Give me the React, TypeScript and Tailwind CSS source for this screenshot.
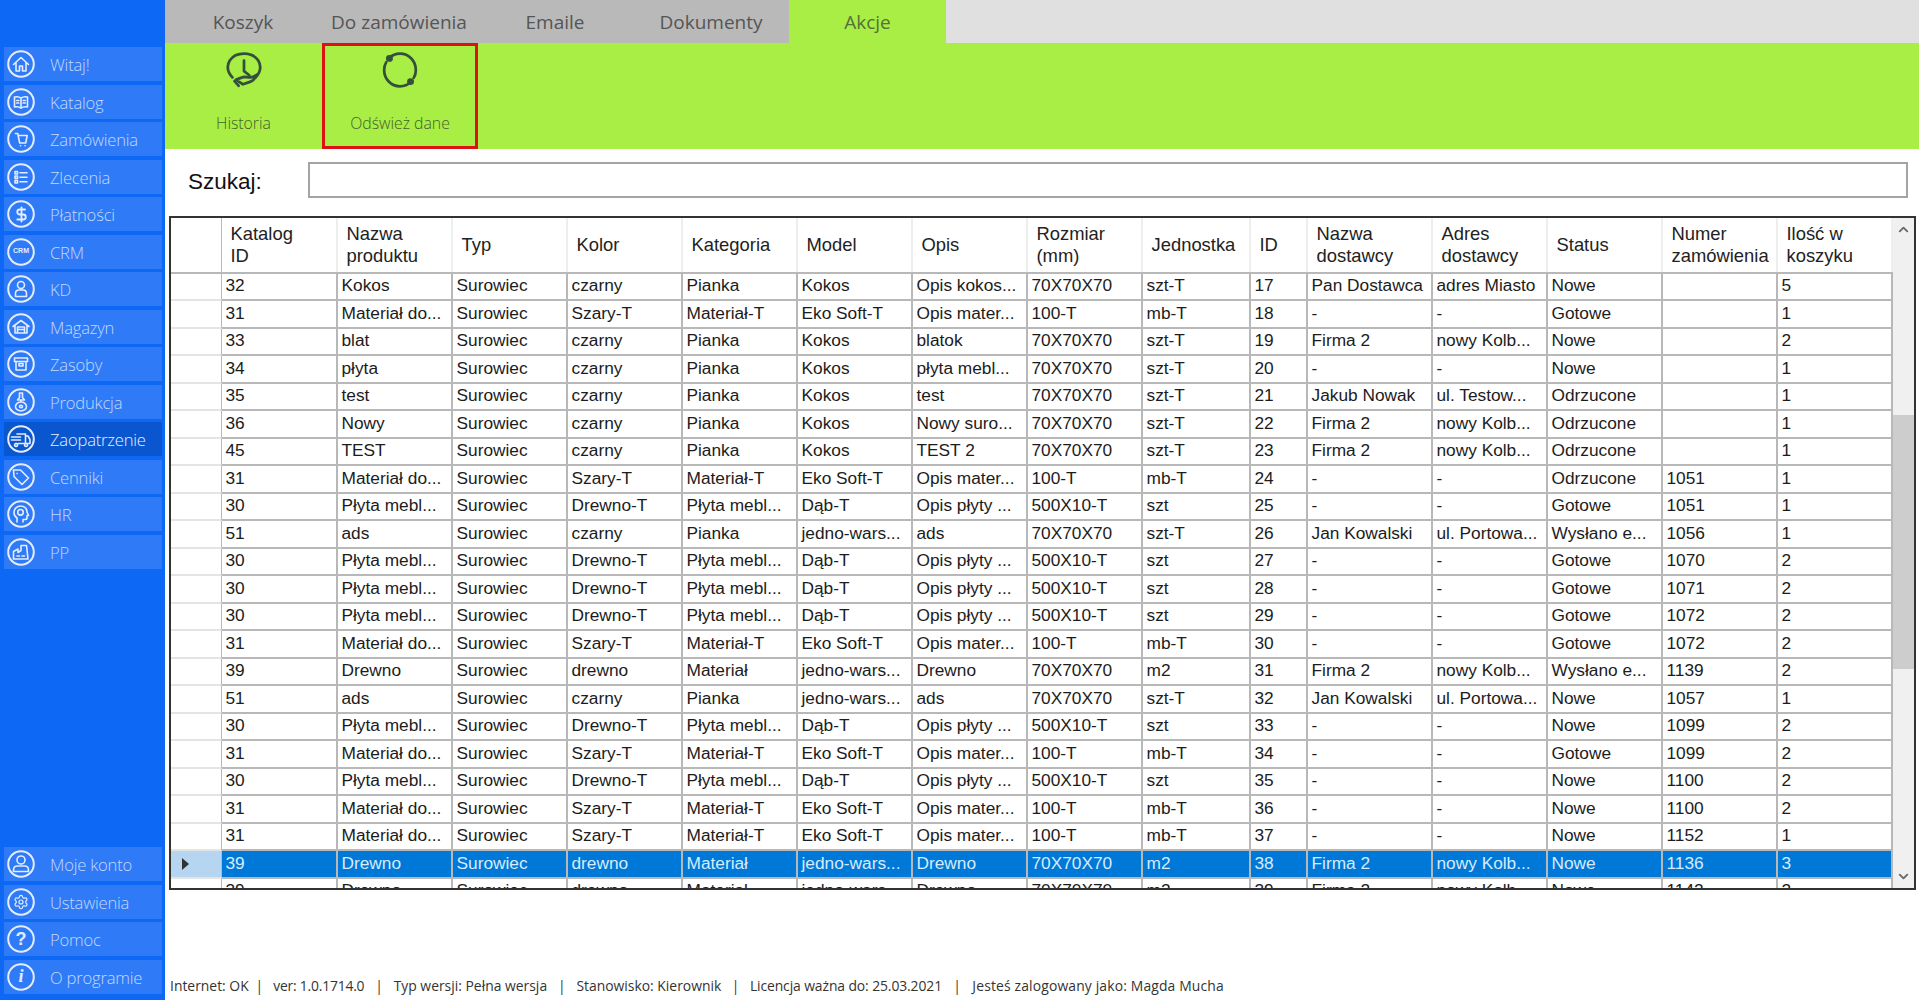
import React from 'react';
import { ChevronUp, ChevronDown, DollarSign, Settings } from 'lucide-react';

const glyphs: Record<string, React.ReactNode> = {
  home: <path d="M6.500 14.500 14 7.500l7.500 7M9 12.500V21h3.500v-5h3v5H19v-8.500" />,
  book: <path d="M7.500 9c2.500-.6 4.800-.3 6.500 1.200 1.700-1.500 4-1.800 6.500-1.200v10c-2.500-.6-4.800-.2-6.500 1.200-1.700-1.400-4-1.800-6.500-1.200zM14 10.200v10M9.700 12.500h2.200M9.700 15h2.200M16.100 12.500h2.200M16.100 15h2.200" />,
  cart: <path d="M8.500 8.500h2.200l2 9.500h6l1.500-7.500H11.200M13.500 20.800h.1M18 20.800h.1" />,
  list: <path d="M8 8.500h2.500V11H8zM8 13h2.500v2.500H8zM8 17.500h2.500V20H8zM13 9.800h7M13 14.200h7M13 18.700h7" />,
  user: <path d="M14 6.500a3.500 3.500 0 1 1 0 7 3.500 3.500 0 0 1 0-7zM8.500 21.500v-3c0-2 1.500-3.500 3.500-3.500h4c2 0 3.500 1.500 3.500 3.500v3z" />,
  warehouse: <path d="M6 13.500 14 7.500l8 6M8 12.500V20h12v-7.500M10.500 20v-6h7v6M10.500 16.500h7" />,
  box: <path d="M7.500 8h13v3.500h-13zM9 11.500V20h10v-8.500M12 13.500h4V16h-4z" />,
  drill: <path d="M12.500 5v4.500L10.500 12h7l-2-2.500V5zM14 12v2M8.500 18.500a5.500 4.500 0 1 0 11 0 5.500 4.500 0 1 0-11 0zM12.500 18.500a1.500 1.300 0 1 0 3 0 1.500 1.300 0 1 0-3 0z" />,
  truck: <path d="M10 9h8.500v9.500H11M18.500 11h2.500l2 3.500v4h-4.500M4.500 12h9M4.500 15h9M9 18.500a1.500 1.500 0 1 0 .1 0M19 18.500a1.500 1.500 0 1 0 .1 0" />,
  tag: <path d="M6.500 7h7l8 8-6.500 6.500-8-8zM10 10.500h.1" />,
  head: <path d="M10 22v-4c-2-1.200-3-3-3-5.500C7 8.800 10 6 13.500 6c3.700 0 6.500 2.500 6.500 6l1.500 3.500H20V18c0 1-.8 1.500-2 1.500h-2V22M13.500 9.500a2.800 2.800 0 1 0 0 5.600 2.800 2.800 0 0 0 0-5.600z" />,
  factory: <path d="M6.500 21v-7.500l4.500-2.500v3.500l3-2V7.500h5.500L21 21zM10 18h2.500M15 18h2.500" />,
  account: <path d="M14 6a4 4 0 1 1 0 8 4 4 0 0 1 0-8zM6.500 21.500v-1.500c0-2.500 1.500-4 4-4h7c2.500 0 4 1.500 4 4v1.500z" />,
};

const Icon = ({ name }: { name: string }) => (
  <span className="relative block w-7 h-7 shrink-0 ml-[3px] text-[#e4edff]">
    <svg viewBox="0 0 28 28" width="28" height="28" fill="none" stroke="currentColor" strokeWidth="1.600" strokeLinecap="round" strokeLinejoin="round">
      <circle cx="14" cy="14" r="12.800" strokeWidth="2" />
      {glyphs[name]}
    </svg>
    {name === 'dollar' && <DollarSign size={17} strokeWidth={2.600} className="absolute top-[5.500px] left-[5.500px]" />}
    {name === 'gear' && <Settings size={16} strokeWidth={1.800} className="absolute top-[6px] left-[6px]" />}
    {name === 'crm' && <span className="absolute inset-0 flex items-center justify-center text-[7px] font-bold font-['Liberation_Sans',sans-serif]">CRM</span>}
    {name === 'help' && <span className="absolute inset-0 flex items-center justify-center text-[18px] font-bold font-['Liberation_Sans',sans-serif]">?</span>}
    {name === 'info' && <span className="absolute inset-0 flex items-center justify-center text-[18px] font-bold italic font-['Liberation_Serif',serif]">i</span>}
  </span>
);

const menuTop = [
  ['Witaj!', 'home'],
  ['Katalog', 'book'],
  ['Zamówienia', 'cart'],
  ['Zlecenia', 'list'],
  ['Płatności', 'dollar'],
  ['CRM', 'crm'],
  ['KD', 'user'],
  ['Magazyn', 'warehouse'],
  ['Zasoby', 'box'],
  ['Produkcja', 'drill'],
  ['Zaopatrzenie', 'truck'],
  ['Cenniki', 'tag'],
  ['HR', 'head'],
  ['PP', 'factory'],
];
const menuBottom = [
  ['Moje konto', 'account'],
  ['Ustawienia', 'gear'],
  ['Pomoc', 'help'],
  ['O programie', 'info'],
];

const MenuItem = ({ label, icon }: { label: string; icon: string }) => {
  const active = label === 'Zaopatrzenie';
  return (
    <div className={`h-[34px] mb-[3.500px] flex items-center ${active ? 'bg-[#0a56cf] text-[#e8f0ff]' : 'bg-[#2f7bf7] text-[#c4d9fc]'}`}>
      <Icon name={icon} />
      <span className="ml-[15px] pt-[3px] text-[16.600px] font-light tracking-[-0.2px]">{label}</span>
    </div>
  );
};

const columns = [
  { w: 'w-[116px]', title: ['Katalog', 'ID'] },
  { w: 'w-[115px]', title: ['Nazwa', 'produktu'] },
  { w: 'w-[115px]', title: ['Typ'] },
  { w: 'w-[115px]', title: ['Kolor'] },
  { w: 'w-[115px]', title: ['Kategoria'] },
  { w: 'w-[115px]', title: ['Model'] },
  { w: 'w-[115px]', title: ['Opis'] },
  { w: 'w-[115px]', title: ['Rozmiar', '(mm)'] },
  { w: 'w-[108px]', title: ['Jednostka'] },
  { w: 'w-[57px]', title: ['ID'] },
  { w: 'w-[125px]', title: ['Nazwa', 'dostawcy'] },
  { w: 'w-[115px]', title: ['Adres', 'dostawcy'] },
  { w: 'w-[115px]', title: ['Status'] },
  { w: 'w-[115px]', title: ['Numer', 'zamówienia'] },
  { w: 'w-[115px]', title: ['Ilość w', 'koszyku'] },
];

const kokos = (cat: string, name: string, opis: string) => [cat, name, 'Surowiec', 'czarny', 'Pianka', 'Kokos', opis, '70X70X70', 'szt-T'];
const material = ['31', 'Materiał do...', 'Surowiec', 'Szary-T', 'Materiał-T', 'Eko Soft-T', 'Opis mater...', '100-T', 'mb-T'];
const plyta = ['30', 'Płyta mebl...', 'Surowiec', 'Drewno-T', 'Płyta mebl...', 'Dąb-T', 'Opis płyty ...', '500X10-T', 'szt'];
const ads = ['51', 'ads', 'Surowiec', 'czarny', 'Pianka', 'jedno-wars...', 'ads', '70X70X70', 'szt-T'];
const drewno = ['39', 'Drewno', 'Surowiec', 'drewno', 'Materiał', 'jedno-wars...', 'Drewno', '70X70X70', 'm2'];

const rows: string[][] = [
  [...kokos('32', 'Kokos', 'Opis kokos...'), '17', 'Pan Dostawca', 'adres Miasto', 'Nowe', '', '5'],
  [...material, '18', '-', '-', 'Gotowe', '', '1'],
  [...kokos('33', 'blat', 'blatok'), '19', 'Firma 2', 'nowy Kolb...', 'Nowe', '', '2'],
  [...kokos('34', 'płyta', 'płyta mebl...'), '20', '-', '-', 'Nowe', '', '1'],
  [...kokos('35', 'test', 'test'), '21', 'Jakub Nowak', 'ul. Testow...', 'Odrzucone', '', '1'],
  [...kokos('36', 'Nowy', 'Nowy suro...'), '22', 'Firma 2', 'nowy Kolb...', 'Odrzucone', '', '1'],
  [...kokos('45', 'TEST', 'TEST 2'), '23', 'Firma 2', 'nowy Kolb...', 'Odrzucone', '', '1'],
  [...material, '24', '-', '-', 'Odrzucone', '1051', '1'],
  [...plyta, '25', '-', '-', 'Gotowe', '1051', '1'],
  [...ads, '26', 'Jan Kowalski', 'ul. Portowa...', 'Wysłano e...', '1056', '1'],
  [...plyta, '27', '-', '-', 'Gotowe', '1070', '2'],
  [...plyta, '28', '-', '-', 'Gotowe', '1071', '2'],
  [...plyta, '29', '-', '-', 'Gotowe', '1072', '2'],
  [...material, '30', '-', '-', 'Gotowe', '1072', '2'],
  [...drewno, '31', 'Firma 2', 'nowy Kolb...', 'Wysłano e...', '1139', '2'],
  [...ads, '32', 'Jan Kowalski', 'ul. Portowa...', 'Nowe', '1057', '1'],
  [...plyta, '33', '-', '-', 'Nowe', '1099', '2'],
  [...material, '34', '-', '-', 'Gotowe', '1099', '2'],
  [...plyta, '35', '-', '-', 'Nowe', '1100', '2'],
  [...material, '36', '-', '-', 'Nowe', '1100', '2'],
  [...material, '37', '-', '-', 'Nowe', '1152', '1'],
  [...drewno, '38', 'Firma 2', 'nowy Kolb...', 'Nowe', '1136', '3'],
  [...drewno, '39', 'Firma 2', 'nowy Kolb...', 'Nowe', '1142', '2'],
];
const selectedRow = 21;

const tabs = ['Koszyk', 'Do zamówienia', 'Emaile', 'Dokumenty', 'Akcje'];

export default function App() {
  return (
    <div className="w-[1919px] h-[1000px] flex overflow-hidden bg-white font-['Open_Sans',sans-serif]">
      {/* Sidebar */}
      <aside className="w-[165px] shrink-0 bg-[#0d69f5] flex flex-col justify-between pt-[47px] pl-1 pr-[3px] pb-[3px]">
        <div>
          {menuTop.map(([label, icon]) => <MenuItem key={label} label={label} icon={icon} />)}
        </div>
        <div>
          {menuBottom.map(([label, icon]) => <MenuItem key={label} label={label} icon={icon} />)}
        </div>
      </aside>

      <main className="flex-1 min-w-0 flex flex-col">
        {/* Tabs */}
        <div className="h-[43px] shrink-0 flex bg-[#e0e0e0]">
          {tabs.map(t => (
            <div key={t} className={`flex items-center justify-center pt-[1px] text-[19px] ${t === 'Akcje' ? 'w-[157px] bg-[#a9ee44] text-[#55703a]' : 'w-[156px] bg-[#b9b9b9] text-[#555555]'}`}>
              {t}
            </div>
          ))}
        </div>

        {/* Toolbar */}
        <div className="h-[106px] shrink-0 flex bg-[#a9ee44] text-[#46602e]">
          <div className="w-[157px] flex flex-col items-center pt-[8px]">
            <svg viewBox="0 0 36 36" width="38" height="38" fill="none" stroke="#33503c" strokeWidth="2.600" strokeLinecap="round" strokeLinejoin="round">
              <path d="M7 25C2.500 20 1.500 14 4.500 9 7.500 4.500 12.500 2.500 18 2.500c5.500 0 10.500 2 13.500 6.500 3 5 2 11-2.500 16" />
              <path d="M18 9v10l5 4" />
              <path d="M11 27c3-1.500 5-2 7-2.500l5 .5c3 .5 5-1 7-2.500-1 4-4 6-7 7l-6 2-4-2.500z" />
              <path d="M11 27l-2 1.500 4 4.500" />
            </svg>
            <span className="mt-[22.500px] text-[15.800px] font-light">Historia</span>
          </div>
          <div className="w-[156px] flex flex-col items-center pt-[5px] border-[3px] border-[#dd1313]">
            <svg viewBox="0 0 36 36" width="38" height="38" fill="none" stroke="#33503c" strokeWidth="2.600" strokeLinecap="round">
              <path d="M8 6.500C11 3.500 14.500 2.500 18 2.500c8.500 0 15 7 15 15.500 0 2.500-.5 5-2 7.500" />
              <path d="M28 29.500C25 32.500 21.500 33.500 18 33.500 9.500 33.500 3 26.500 3 18c0-2.500.5-5 2-7.500" />
              <circle cx="8" cy="7" r="2" fill="#33503c" />
              <circle cx="28" cy="29" r="2" fill="#33503c" />
            </svg>
            <span className="mt-[22.500px] text-[15.800px] font-light">Odśwież dane</span>
          </div>
        </div>

        {/* Search */}
        <div className="h-[67px] shrink-0 flex items-center pl-[23px] pr-[11px] pb-[6px]">
          <span className="w-[120px] shrink-0 pt-[4px] text-[22.500px] text-[#111111] font-['Liberation_Sans',sans-serif]">Szukaj:</span>
          <div className="flex-1 h-[36px] border-2 border-[#a4a4a4] bg-white" />
        </div>

        {/* Grid */}
        <div className="ml-[4px] mr-[3px] h-[674px] shrink-0 border-2 border-[#333333] flex overflow-hidden bg-white font-['Liberation_Sans',sans-serif]">
          <div className="flex-1 min-w-0 overflow-hidden">
            <div className="h-[55.500px] flex border-b-2 border-[#b8b8b8]">
              <div className="w-[51px] shrink-0 border-r border-[#b8b8b8]" />
              {columns.map(c => (
                <div key={c.title.join(' ')} className={`${c.w} shrink-0 flex flex-col justify-center pl-[8.500px] text-[18.400px] leading-[22px] text-[#222222] border-r-2 border-[#eeeeee]`}>
                  {c.title.map(line => <span key={line} className="whitespace-nowrap">{line}</span>)}
                </div>
              ))}
            </div>
            {rows.map((row, i) => {
              const selected = i === selectedRow;
              return (
                <div key={i} className="h-[27.500px] flex">
                  <div className={`w-[51px] shrink-0 flex items-center border-r border-[#b8b8b8] border-b-2 border-b-[#e4e4e4] ${selected ? 'bg-[#b5d5f0]' : ''}`}>
                    {selected && <span className="ml-[11px] w-0 h-0 border-y-[6px] border-y-transparent border-l-[7px] border-l-[#333333]" />}
                  </div>
                  {row.map((cell, j) => (
                    <div key={j} className={`${columns[j].w} shrink-0 flex items-center pl-[3.500px] text-[17.300px] whitespace-nowrap overflow-hidden border-r-2 border-b-2 border-[#b8b8b8] ${selected ? 'bg-[#0078d7] text-[#d7ebfb]' : 'text-[#1c1c1c]'}`}>
                      {cell}
                    </div>
                  ))}
                </div>
              );
            })}
          </div>

          {/* Scrollbar */}
          <div className="w-[21px] shrink-0 bg-[#f0f0f0] flex flex-col items-center text-[#6a6a6a]">
            <ChevronUp size={15} strokeWidth={3} className="mt-[4px]" />
            <div className="mt-[178px] w-full h-[254px] bg-[#cdcdcd]" />
            <div className="flex-1" />
            <ChevronDown size={15} strokeWidth={3} className="mb-[4px]" />
          </div>
        </div>

        {/* Status bar */}
        <div className="flex-1 flex items-end pl-[5px] pb-[3px] text-[13.900px] text-[#333333] whitespace-pre">
          <span>Internet: OK</span>
          <span className="tracking-[-0.2px]">{'  |   ver: 1.0.1714.0'}</span>
          <span>{'   |   Typ wersji: Pełna wersja'}</span>
          <span>{'   |   Stanowisko: Kierownik'}</span>
          <span className="tracking-[-0.1px]">{'   |   Licencja ważna do: 25.03.2021'}</span>
          <span className="tracking-[0.15px]">{'   |   Jesteś zalogowany jako: Magda Mucha'}</span>
        </div>
      </main>
    </div>
  );
}
